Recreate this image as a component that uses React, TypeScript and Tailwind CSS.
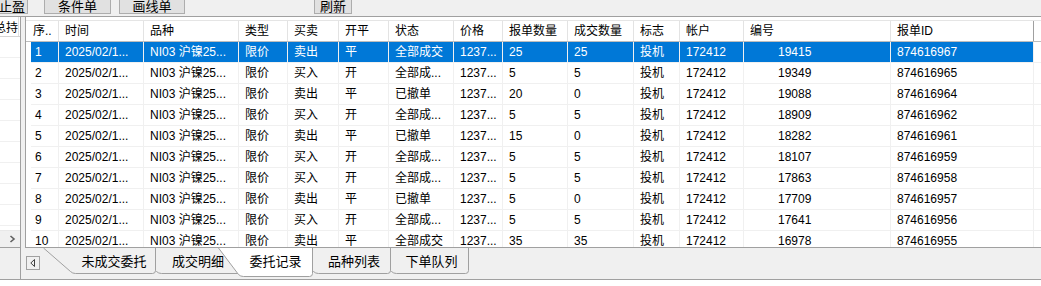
import React from 'react';

const headers = ['序..', '时间', '品种', '类型', '买卖', '开平', '状态', '价格', '报单数量', '成交数量', '标志', '帐户', '编号', '报单ID'];

const rows: string[][] = [
  ['1', '2025/02/1...', 'NI03 沪镍25...', '限价', '卖出', '平', '全部成交', '1237...', '25', '25', '投机', '172412', '19415', '874616967'],
  ['2', '2025/02/1...', 'NI03 沪镍25...', '限价', '买入', '开', '全部成...', '1237...', '5', '5', '投机', '172412', '19349', '874616965'],
  ['3', '2025/02/1...', 'NI03 沪镍25...', '限价', '卖出', '平', '已撤单', '1237...', '20', '0', '投机', '172412', '19088', '874616964'],
  ['4', '2025/02/1...', 'NI03 沪镍25...', '限价', '买入', '开', '全部成...', '1237...', '5', '5', '投机', '172412', '18909', '874616962'],
  ['5', '2025/02/1...', 'NI03 沪镍25...', '限价', '卖出', '平', '已撤单', '1237...', '15', '0', '投机', '172412', '18282', '874616961'],
  ['6', '2025/02/1...', 'NI03 沪镍25...', '限价', '买入', '开', '全部成...', '1237...', '5', '5', '投机', '172412', '18107', '874616959'],
  ['7', '2025/02/1...', 'NI03 沪镍25...', '限价', '买入', '开', '全部成...', '1237...', '5', '5', '投机', '172412', '17863', '874616958'],
  ['8', '2025/02/1...', 'NI03 沪镍25...', '限价', '卖出', '平', '已撤单', '1237...', '5', '0', '投机', '172412', '17709', '874616957'],
  ['9', '2025/02/1...', 'NI03 沪镍25...', '限价', '买入', '开', '全部成...', '1237...', '5', '5', '投机', '172412', '17641', '874616956'],
  ['10', '2025/02/1...', 'NI03 沪镍25...', '限价', '卖出', '平', '全部成交', '1237...', '35', '35', '投机', '172412', '16978', '874616955'],
];

function cellPad(i: number) {
  if (i === 0) return 'pl-[4px]';
  if (i === 12) return 'pl-[34px]';
  return 'pl-[6px]';
}

function tabPath(L: number, tip: number, R: number, H: number) {
  return `M${L} 0 L${tip - 2} ${H - 2} Q${tip} ${H} ${tip + 3} ${H} L${R - 3} ${H} Q${R} ${H} ${R} ${H - 3} L${R} 0`;
}

function TabShapes() {
  const H = 25.5;
  const HA = 28.5;
  return (
    <svg className="absolute inset-0 h-full w-full" width="1016" height="31">
      <path d={tabPath(340.5, 368.5, 443.5, H)} fill="#f0f0f0" stroke="#a0a0a0" strokeWidth="1" />
      <path d={tabPath(262.5, 290.5, 365.5, H)} fill="#f0f0f0" stroke="#a0a0a0" strokeWidth="1" />
      <path d={tabPath(105.5, 133.5, 225.5, H)} fill="#f0f0f0" stroke="#a0a0a0" strokeWidth="1" />
      <path d={tabPath(18.5, 47.5, 130.5, H)} fill="#f0f0f0" stroke="#a0a0a0" strokeWidth="1" />
      <path d={tabPath(193.5, 215.5, 287.5, HA)} fill="#ffffff" stroke="#a0a0a0" strokeWidth="1" />
    </svg>
  );
}

function ToolButton({ children, className }: { children: React.ReactNode; className: string }) {
  return (
    <div
      className={
        'flex h-[15px] -mt-[1px] items-center border border-[#adadad] bg-[#e1e1e1] text-[13px] leading-[13px] text-black ' +
        className
      }
    >
      {children}
    </div>
  );
}

export default function App() {
  return (
    <div className="relative h-[286px] w-[1041px] overflow-hidden bg-white font-['Liberation_Sans','Noto_Sans_CJK_SC',sans-serif] text-[12px] text-black">
      {/* toolbar */}
      <div className="flex h-[17px] overflow-hidden border-b border-[#a0a0a0] bg-[#f0f0f0]">
        <ToolButton className="-ml-[12px] w-[40px] justify-end pr-[2px]">止盈</ToolButton>
        <ToolButton className="ml-[16px] w-[67px] justify-center">条件单</ToolButton>
        <ToolButton className="ml-[8px] w-[66px] justify-center">画线单</ToolButton>
        <ToolButton className="ml-[129px] w-[38px] justify-center">刷新</ToolButton>
      </div>

      {/* middle */}
      <div className="flex h-[230px]">
        {/* left panel */}
        <div className="flex w-[21px] flex-col border-r border-[#a0a0a0] bg-white">
          <div className="flex h-[20px] overflow-hidden border-b border-[#d5d5d5]">
            <div className="flex w-[19px] items-center justify-end overflow-hidden whitespace-nowrap border-r border-[#e0e0e0] pt-[2px]">
              总持
            </div>
          </div>
          <div className="flex flex-1 flex-col overflow-hidden">
            {Array.from({ length: 9 }).map((_, i) => (
              <div key={i} className="h-[21px] shrink-0 border-b border-[#f0f0f0]" />
            ))}
          </div>
          <div className="flex h-[17px] items-center border-t border-[#e8e8e8] bg-[#f0f0f0] pl-[9px]">
            <svg width="7" height="8" viewBox="0 0 7 8">
              <polyline points="1.5,1 5,4 1.5,7" fill="none" stroke="#606060" strokeWidth="1.6" />
            </svg>
          </div>
        </div>
        <div className="w-[4px] bg-[#f0f0f0]" />
        {/* table */}
        <div className="flex-1 overflow-hidden border-l border-[#a0a0a0] bg-white pt-[3px]">
          <div className="flex h-[22px] border-y border-[#e5e5e5] border-b-[#bdbdbd] pl-[2px]">
            <div className="grid grid-cols-[31px_85px_95px_49px_51px_50px_65px_49px_65px_66px_46px_64px_147px_143px]">
              {headers.map((h, i) => (
                <div
                  key={i}
                  className={
                    'flex items-center whitespace-nowrap border-r bg-white ' +
                    (i === 0 ? 'pl-[5px] ' : 'pl-[6px] ') +
                    (i === 13 ? 'border-[#a0a0a0]' : 'border-[#e3e3e3]')
                  }
                >
                  {h}
                </div>
              ))}
            </div>
          </div>
          {rows.map((r, ri) => (
            <div key={ri} className="ml-[5px] border-b border-[#f0f0f0]">
              <div
                className={
                  'grid h-[20px] w-[1003px] grid-cols-[28px_85px_95px_49px_51px_50px_65px_49px_65px_66px_46px_64px_147px_143px] ' +
                  (ri === 0 ? 'bg-[#0078d7] text-white' : 'text-black')
                }
              >
                {r.map((c, i) => (
                  <div
                    key={i}
                    className={'flex items-center overflow-hidden whitespace-nowrap border-r border-[#f0f0f0] ' + cellPad(i)}
                  >
                    {c}
                  </div>
                ))}
              </div>
            </div>
          ))}
        </div>
      </div>

      {/* tab strip */}
      <div className="flex h-[33px] border-b border-[#a0a0a0] bg-[#f0f0f0]">
        <div className="w-[21px] border-r border-t border-[#a0a0a0]" />
        <div className="w-[4px]" />
        <div className="relative flex-1 border-t border-[#a0a0a0]">
          <TabShapes />
          <div className="relative flex items-start text-[13px]">
            <div className="ml-[1px] mt-[8px] flex h-[14px] w-[14px] items-center justify-center border border-[#a0a0a0] bg-[#f0f0f0]">
              <svg width="6" height="8" viewBox="0 0 6 8">
                <polygon points="4.5,0.5 4.5,7.5 0.8,4" fill="none" stroke="#404040" strokeWidth="1" />
              </svg>
            </div>
            <div className="ml-[32px] flex h-[27px] w-[84px] items-center justify-center whitespace-nowrap">未成交委托</div>
            <div className="flex h-[27px] w-[84px] items-center justify-center whitespace-nowrap">成交明细</div>
            <div className="flex h-[27px] w-[71px] items-center justify-center whitespace-nowrap">委托记录</div>
            <div className="flex h-[27px] w-[86px] items-center justify-center whitespace-nowrap">品种列表</div>
            <div className="flex h-[27px] w-[69px] items-center justify-center whitespace-nowrap">下单队列</div>
          </div>
        </div>
      </div>
    </div>
  );
}
